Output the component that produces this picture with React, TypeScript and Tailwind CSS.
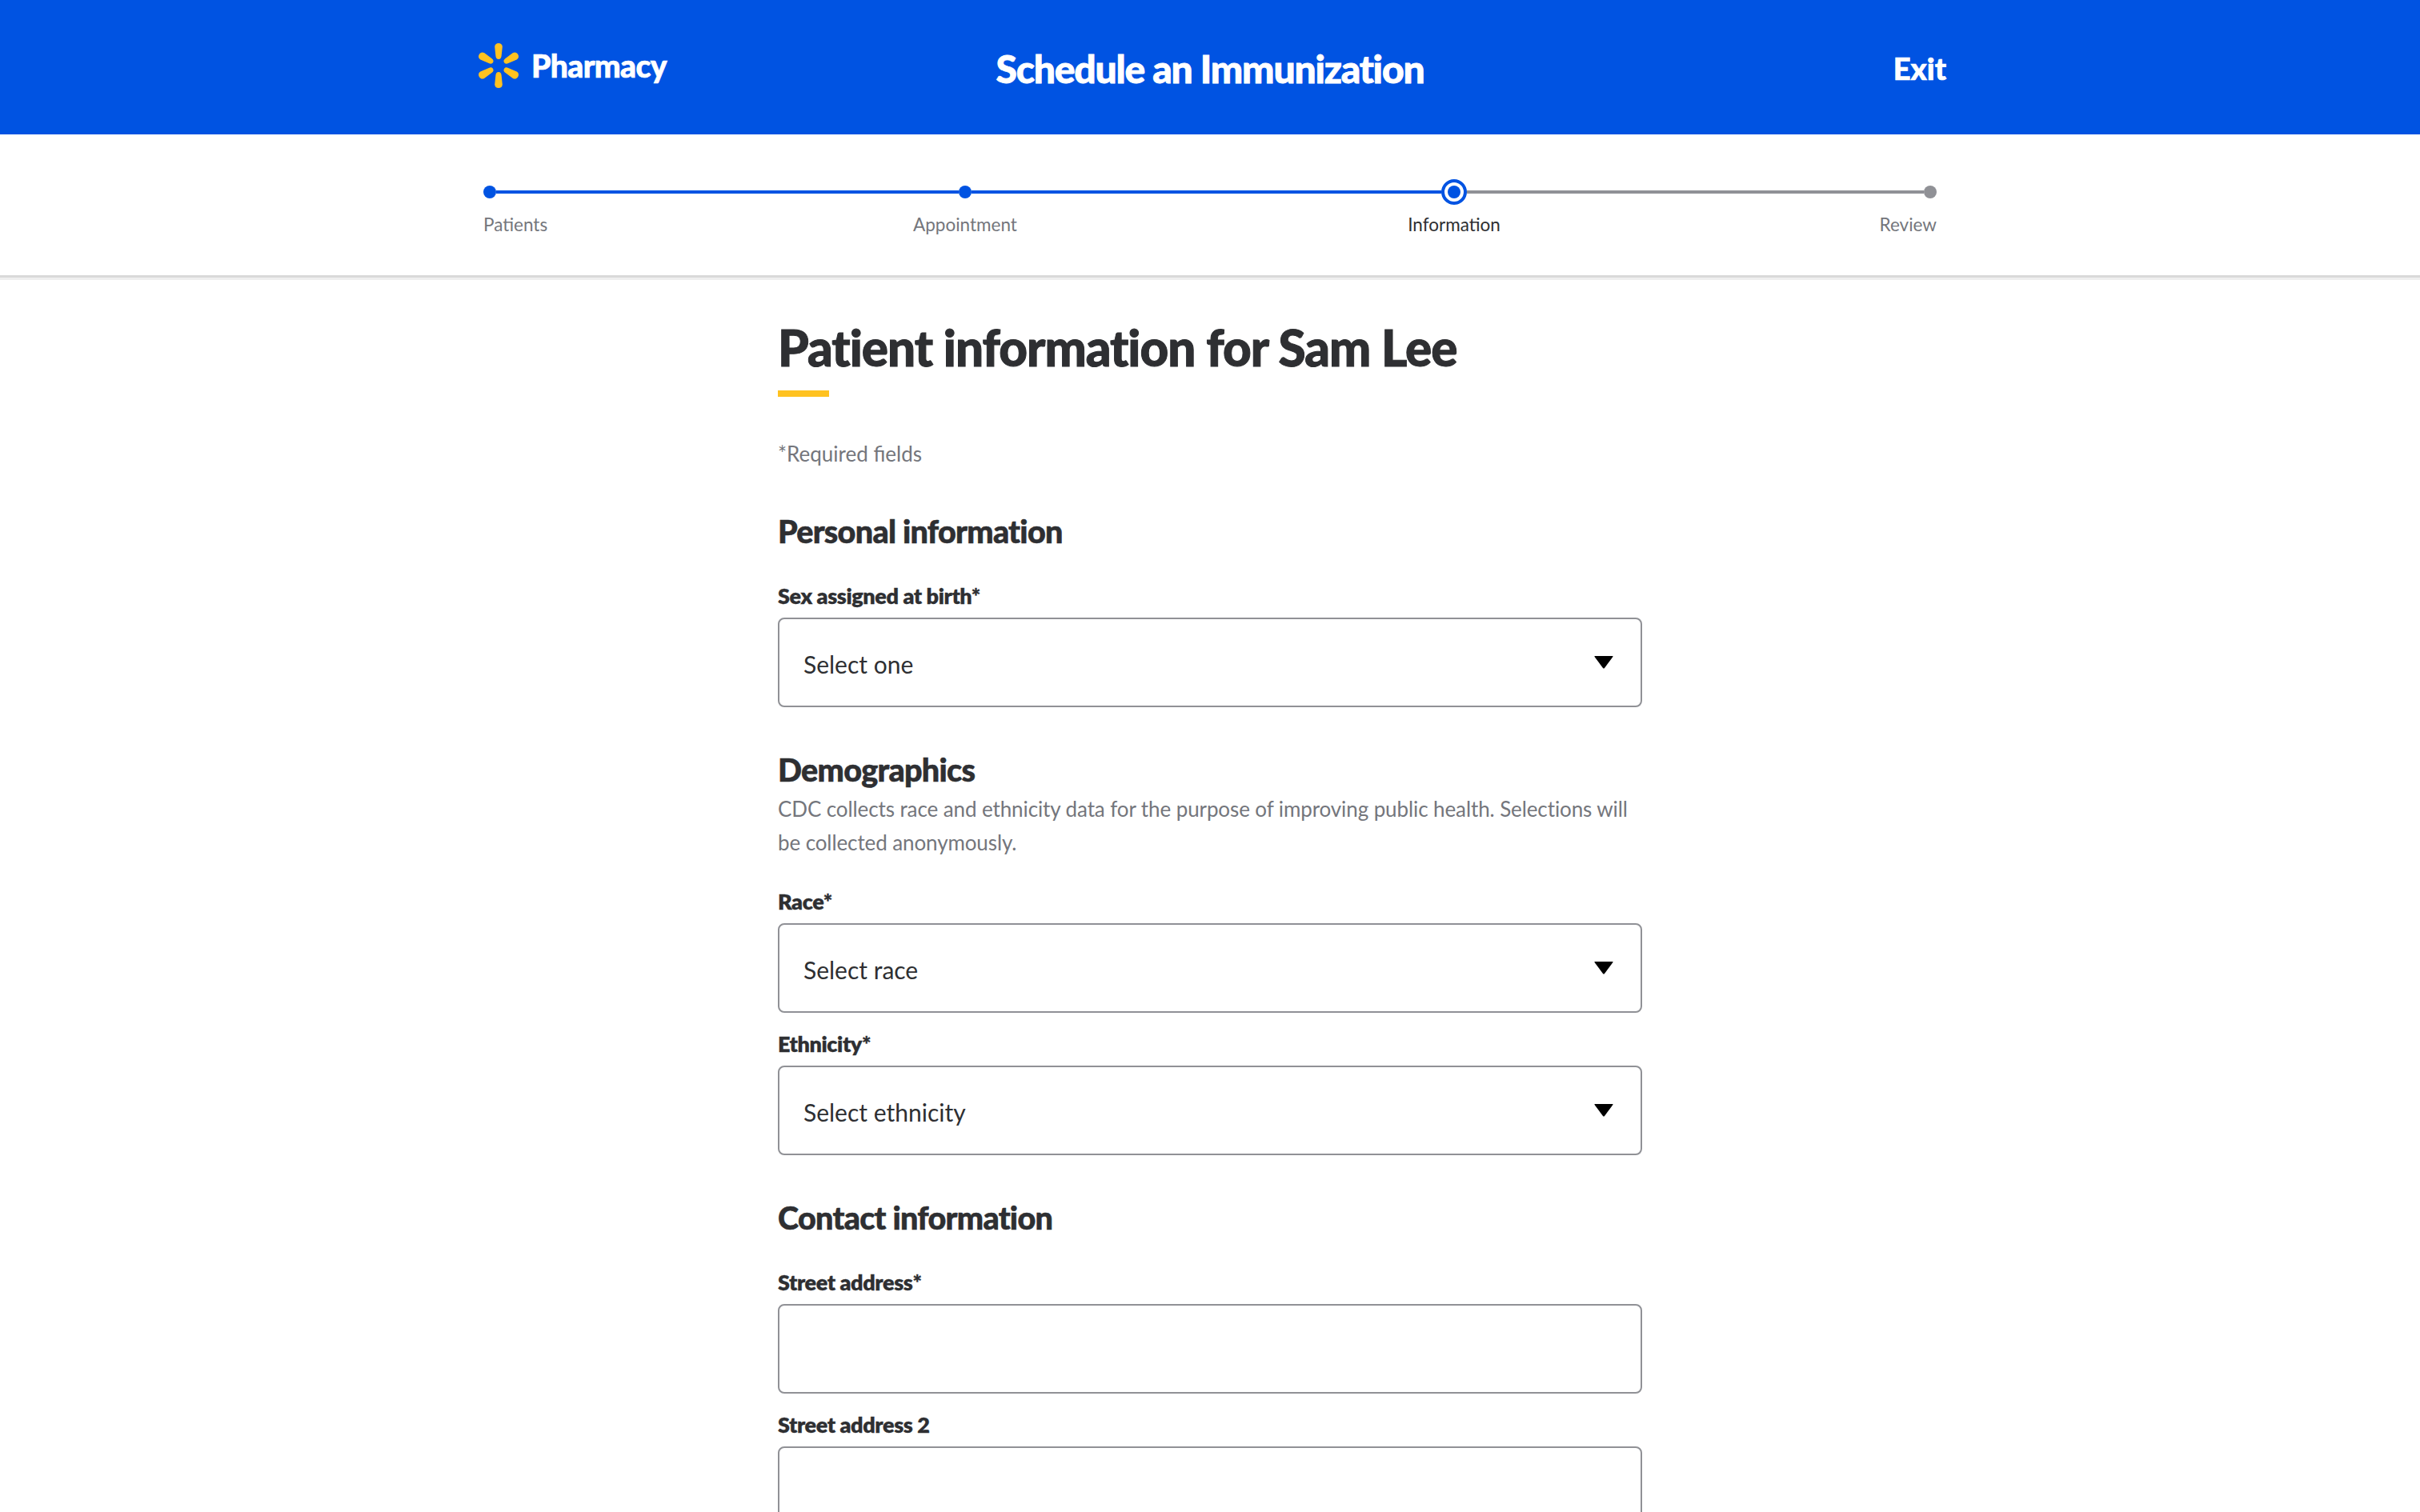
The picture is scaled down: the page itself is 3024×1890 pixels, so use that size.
const font = { fontFamily: '"Lato", "Open Sans", sans-serif' };

const petals = [0, 60, 120, 180, 240, 300];

const Spark = () => (
    <svg width="56" height="60" viewBox="-28 -30 56 60" className="shrink-0">
        {petals.map((deg) => (
            <path
                key={deg}
                transform={`rotate(${deg})`}
                fill="#ffc220"
                d="M0 -8C-2.2 -8 -3.3 -9.5 -3.6 -12L-4.8 -23.5C-4.8 -26.5 -2.6 -28 0 -28C2.6 -28 4.8 -26.5 4.8 -23.5L3.6 -12C3.3 -9.5 2.2 -8 0 -8Z"
            />
        ))}
    </svg>
);

const Header = () => (
    <header className="h-[168px] bg-[#0053e2] text-white flex items-center">
        <div className="w-[1840px] mx-auto pl-[4px] grid grid-cols-[1fr_auto_1fr] items-center">
            <div className="flex items-center gap-[13px] -translate-y-[2px] -ml-[1px]">
                <Spark />
                <span className="text-[39px] font-black tracking-[-0.6px] [-webkit-text-stroke:0.7px_white]">Pharmacy</span>
            </div>
            <h1 className="text-[48px] font-black tracking-[-1.2px] translate-y-[2px] -translate-x-[2px] [-webkit-text-stroke:0.8px_white]">
                Schedule an Immunization
            </h1>
            <a className="justify-self-end text-[38px] font-black translate-y-[1px] [-webkit-text-stroke:0.7px_white]">Exit</a>
        </div>
    </header>
);

const Dot = ({ color }: { color: string }) => <span className={`size-4 rounded-full shrink-0 ${color}`} />;

const Stepper = () => (
    <div className="h-[176px] bg-white shadow-[0_3px_0_#d9d9d9,0_6px_0_#efefef] pt-[56px] relative">
        <div className="w-[1816px] ml-[604px]">
            <div className="flex items-center h-8">
                <Dot color="bg-[#0053e2]" />
                <span className="h-1 w-[578px] bg-[#0053e2]" />
                <Dot color="bg-[#0053e2]" />
                <span className="h-1 w-[587px] bg-[#0053e2]" />
                <span className="size-8 shrink-0 rounded-full border-4 border-[#0053e2] bg-white flex items-center justify-center">
                    <span className="size-4 rounded-full bg-[#0053e2]" />
                </span>
                <span className="h-1 flex-1 bg-[#909196]" />
                <Dot color="bg-[#909196]" />
            </div>
            <div className="flex mt-[9px] text-[22.5px] leading-8 text-[#74767c]">
                <span className="w-[502px]">Patients</span>
                <span className="w-[200px] text-center">Appointment</span>
                <span className="w-[200px] ml-[411px] text-center text-[#2e2f32]">Information</span>
                <span className="flex-1 text-right">Review</span>
            </div>
        </div>
    </div>
);

const Label = ({ children }: { children: React.ReactNode }) => (
    <label className="block text-[27px] leading-8 font-extrabold text-[#2e2f32] tracking-[-0.4px] mb-[11px] [-webkit-text-stroke:0.3px_#2e2f32]">
        {children}
    </label>
);

const Select = ({ label, value }: { label: string; value: string }) => (
    <div>
        <Label>{label}</Label>
        <div className="h-[112px] border-2 border-[#909196] rounded-lg px-[30px] flex items-center justify-between text-[30px] text-[#2e2f32]">
            <span className="translate-y-[2px]">{value}</span>
            <svg width="24" height="16" viewBox="0 0 24 16" className="mr-[4px]">
                <path d="M1 0H23Q24 0 23.4 1L13 15Q12 16 11 15L.6 1Q0 0 1 0Z" fill="#000" />
            </svg>
        </div>
    </div>
);

const TextInput = ({ label }: { label: string }) => (
    <div>
        <Label>{label}</Label>
        <div className="h-[112px] border-2 border-[#909196] rounded-lg" />
    </div>
);

const SectionTitle = ({ children }: { children: React.ReactNode }) => (
    <h3 className="text-[39.5px] leading-[48px] font-black text-[#2e2f32] tracking-[-0.7px] [-webkit-text-stroke:0.6px_#2e2f32]">
        {children}
    </h3>
);

export default function App() {
    return (
        <div className="h-screen overflow-hidden bg-white" style={font}>
            <Header />
            <Stepper />
            <main className="w-[1080px] mx-auto pt-[52px]">
                <h2 className="text-[62px] leading-[76px] font-black text-[#2e2f32] tracking-[-1px] [-webkit-text-stroke:1px_#2e2f32]">
                    Patient information for Sam Lee
                </h2>
                <div className="w-16 h-2 bg-[#ffc220] mt-[16px]" />
                <p className="mt-[55px] text-[26px] leading-8 text-[#74767c]">*Required fields</p>

                <div className="mt-[57px]">
                    <SectionTitle>Personal information</SectionTitle>
                </div>
                <div className="mt-[41px]">
                    <Select label="Sex assigned at birth*" value="Select one" />
                </div>

                <div className="mt-[54px]">
                    <SectionTitle>Demographics</SectionTitle>
                </div>
                <p className="text-[26px] leading-[42px] text-[#74767c] tracking-[-0.1px] mt-[4px]">
                    CDC collects race and ethnicity data for the purpose of improving public health. Selections will
                    be collected anonymously.
                </p>
                <div className="mt-[37px] flex flex-col gap-[23px]">
                    <Select label="Race*" value="Select race" />
                    <Select label="Ethnicity*" value="Select ethnicity" />
                </div>

                <div className="mt-[54px]">
                    <SectionTitle>Contact information</SectionTitle>
                </div>
                <div className="mt-[41px] flex flex-col gap-[23px]">
                    <TextInput label="Street address*" />
                    <TextInput label="Street address 2" />
                </div>
            </main>
        </div>
    );
}
